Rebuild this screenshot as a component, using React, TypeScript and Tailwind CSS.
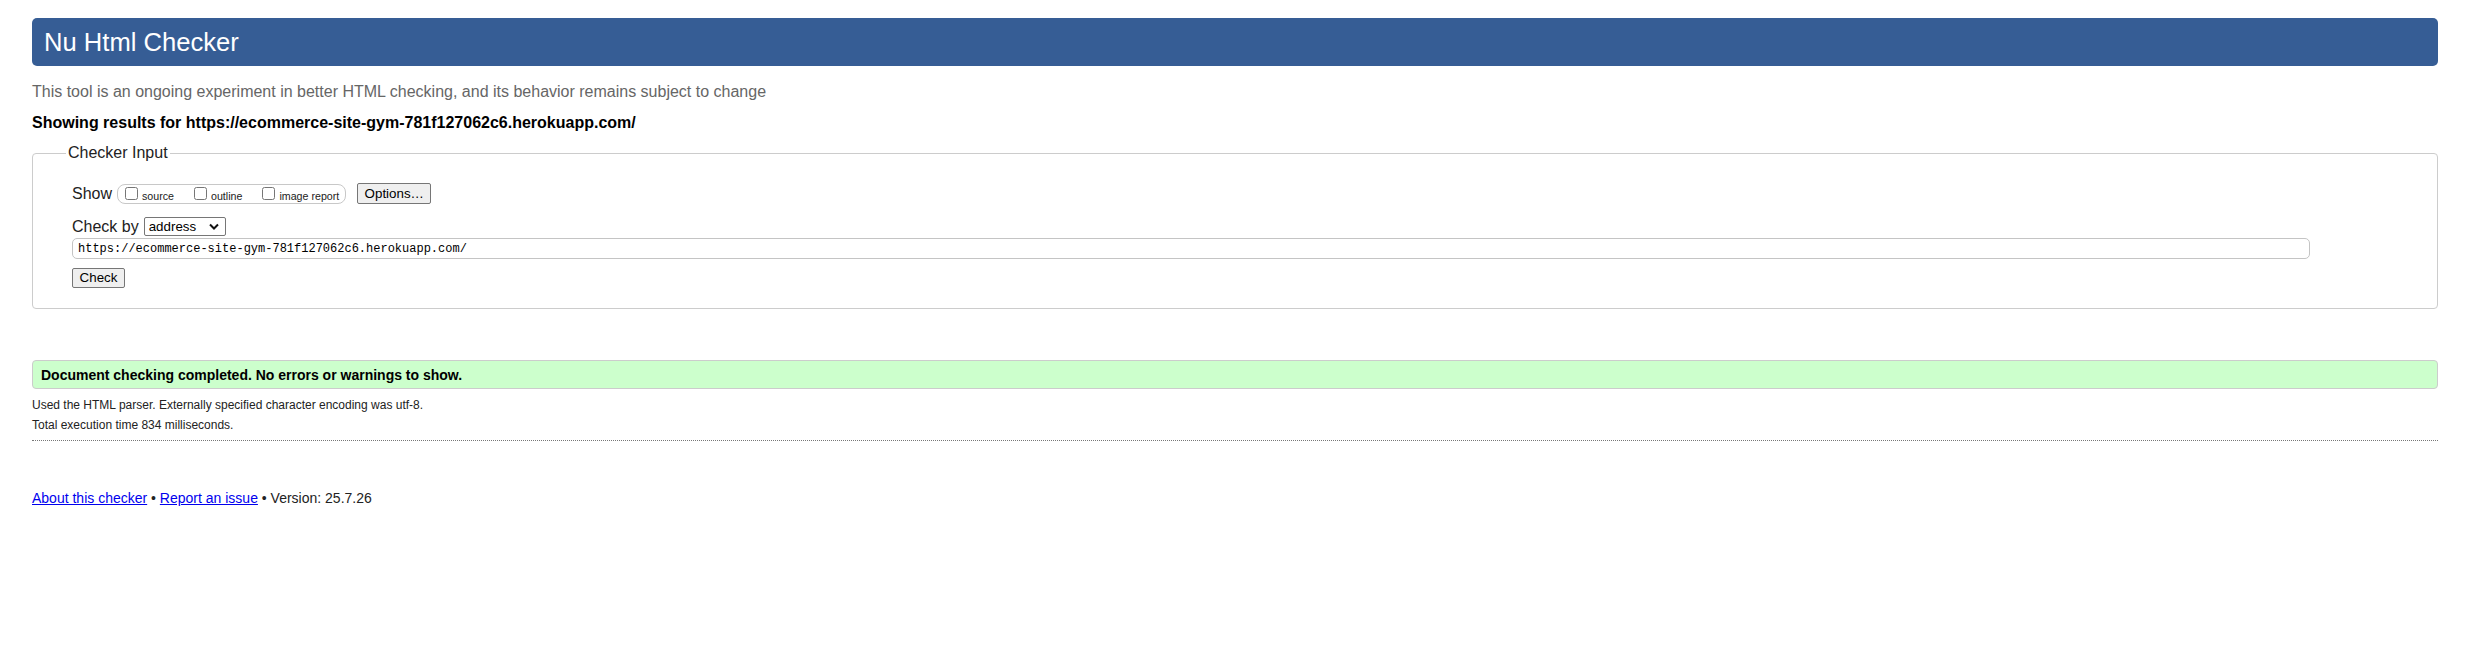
import React from 'react';

const sans = "font-['Liberation_Sans',Arial,sans-serif]";

// one checkbox + its small caption inside the "Show" pill
const ShowOption = ({ label, last }: { label: string; last?: boolean }) => (
  <label className={`flex items-center ${last ? '' : 'mr-[20px]'}`}>
    <input type="checkbox" className="w-[13px] h-[13px] m-0" />
    <span className="ml-[4px] text-[10.67px] leading-[12px] translate-y-[2px] text-[#222]">{label}</span>
  </label>
);

const App = () => {
  const url = 'https://ecommerce-site-gym-781f127062c6.herokuapp.com/';

  return (
    <div className={`${sans} bg-white w-[2479px] h-[647px] pl-[32px] pr-[41px] pt-[18px] text-[#222]`}>
      {/* Title bar */}
      <div className="h-[48px] rounded-[5px] bg-[#365d95] flex items-center pl-[12px]">
        <h1 className="text-white text-[25.6px] leading-[30px] font-normal">Nu Html Checker</h1>
      </div>

      <p className="mt-[16px] text-[16px] leading-[20px] text-[#666]">
        This tool is an ongoing experiment in better HTML checking, and its behavior remains subject to change
      </p>
      <p className="mt-[11px] text-[16px] leading-[20px] font-bold text-black">Showing results for {url}</p>

      {/* Checker input form */}
      <fieldset className="mt-[10px] border border-[#ccc] rounded-[4px] pl-[39px] pb-[20px] pt-[20px]">
        <legend className="-ml-[6px] px-[2px] text-[16px] leading-[20px] text-[#222]">Checker Input</legend>

        <div className="flex items-center h-[21px]">
          <span className="text-[16px] leading-[20px]">Show</span>
          <div className="ml-[5px] flex items-center h-[20px] border border-[#c8c8c8] rounded-[8px] pl-[7px] pr-[6px]">
            <ShowOption label="source" />
            <ShowOption label="outline" />
            <ShowOption label="image report" last />
          </div>
          <button className="ml-[11px] w-[74px] h-[21px] bg-[#efefef] border border-[#767676] rounded-[2px] text-[13.33px] leading-[16px] text-black">
            Options…
          </button>
        </div>

        <div className="mt-[13px] flex items-center h-[19px]">
          <span className="text-[16px] leading-[20px]">Check by</span>
          <div className="ml-[5px] w-[82px] h-[19px] border border-[#767676] rounded-[2px] flex items-center justify-between pl-[4px] pr-[6px] text-[13.33px] leading-[16px] text-black">
            <span>address</span>
            <svg width="10" height="7" viewBox="0 0 10 7">
              <path d="M1 1.5 L5 5.5 L9 1.5" fill="none" stroke="#111" strokeWidth="2" />
            </svg>
          </div>
        </div>

        <div className="mt-[2px] w-[2238px] h-[21px] border border-[#c4c4c4] rounded-[5px] flex items-center pl-[5px]">
          <span className="font-['Liberation_Mono',monospace] text-[12px] leading-[14px] text-black">{url}</span>
        </div>

        <button className="mt-[9px] block w-[53px] h-[20px] bg-[#efefef] border border-[#767676] rounded-[2px] text-[13.33px] leading-[16px] text-black">
          Check
        </button>
      </fieldset>

      {/* Result */}
      <div className="mt-[51px] h-[29px] bg-[#ccffcc] border border-[#ccc] rounded-[4px] flex items-center pl-[8px]">
        <span className="text-[14px] leading-[18px] font-bold text-black">
          Document checking completed. No errors or warnings to show.
        </span>
      </div>
      <p className="mt-[6px] text-[12px] leading-[20px]">Used the HTML parser. Externally specified character encoding was utf-8.</p>
      <p className="text-[12px] leading-[20px]">Total execution time 834 milliseconds.</p>
      <hr className="mt-[5px] border-0 border-t border-dotted border-[#777]" />

      {/* Footer */}
      <p className="mt-[47px] text-[14px] leading-[20px]">
        <a href="#" className="text-[#0000ee] underline">About this checker</a>
        {' • '}
        <a href="#" className="text-[#0000ee] underline">Report an issue</a>
        {' • Version: 25.7.26'}
      </p>
    </div>
  );
};

export default App;
